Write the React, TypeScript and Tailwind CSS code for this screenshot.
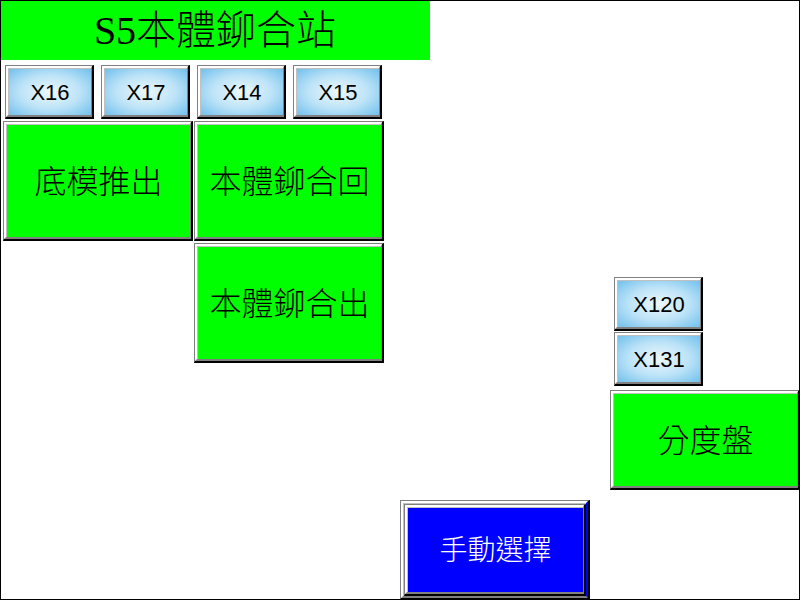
import type { ReactNode } from "react";

const ming = "font-['Liberation_Serif','Noto_Sans_CJK_TC',serif] font-light";

type BevelProps = { children: ReactNode; face: string };

/* Face of a raised key: white and silver on the lit side, grey in the shade. */
function Bevel({ children, face }: BevelProps) {
  return (
    <span className="flex size-full border-t border-l border-r-2 border-b-2 border-t-[#808080] border-l-[#808080] border-r-black border-b-black">
      <span className="flex flex-1 border-t-2 border-l-2 border-r border-b-2 border-t-white border-l-white border-r-[#808080] border-b-[#808080]">
        <span
          className={`flex flex-1 items-center justify-center border-t border-l border-[#c0c0c0] pt-[2px] ${face}`}
        >
          {children}
        </span>
      </span>
    </span>
  );
}

function Sensor({ name }: { name: string }) {
  return (
    <button type="button" className="block h-[54px] w-[89px] shrink-0">
      <Bevel face="bg-[radial-gradient(ellipse_at_center,#edf8fa_0%,#bce3f8_52%,#72c0ec_100%)] font-['Liberation_Sans',Arial,sans-serif] text-[22px] leading-6 text-black">
        {name}
      </Bevel>
    </button>
  );
}

function Action({ label, size }: { label: string; size: string }) {
  return (
    <button type="button" className={`block w-[190px] shrink-0 ${size}`}>
      <Bevel face={`bg-[#00ff00] text-[32px] leading-10 whitespace-nowrap text-black ${ming}`}>
        {label}
      </Bevel>
    </button>
  );
}

export default function App() {
  return (
    <main className="relative flex min-h-screen w-full flex-col bg-white">
      <h1
        className={`flex h-[60px] w-[430px] items-center justify-center bg-[#00ff00] pt-[2px] text-[40px] leading-none whitespace-nowrap text-black ${ming}`}
      >
        S5本體鉚合站
      </h1>

      <div className="flex flex-1">
        <section className="flex shrink-0 flex-col gap-[2px] pt-[5px]">
          <div className="flex gap-[7px] pl-[5px]">
            <Sensor name="X16" />
            <Sensor name="X17" />
            <Sensor name="X14" />
            <Sensor name="X15" />
          </div>
          <div className="grid grid-cols-[190px_190px] gap-x-px gap-y-[2px] pl-[3px]">
            <Action label="底模推出" size="h-[120px]" />
            <Action label="本體鉚合回" size="h-[120px]" />
            <div className="col-start-2">
              <Action label="本體鉚合出" size="h-[120px]" />
            </div>
          </div>
        </section>

        <button type="button" className="ml-4 h-[100px] w-[190px] shrink-0 self-end">
          <span className="flex size-full border-t border-l border-r-2 border-b-2 border-t-[#808080] border-l-[#808080] border-r-black border-b-black">
            <span className="flex flex-1 border-2 border-t-white border-l-white border-r-[#0000ff] border-b-[#808080]">
              <span className="flex flex-1 border-t border-l border-[#c0c0c0]">
                <Bevel
                  face={`bg-[#0000ff] text-[28px] leading-9 whitespace-nowrap text-white ${ming}`}
                >
                  手動選擇
                </Bevel>
              </span>
            </span>
          </span>
        </button>

        <section className="mb-[110px] ml-auto flex shrink-0 flex-col gap-1 self-end">
          <div className="flex flex-col gap-px pl-1">
            <Sensor name="X120" />
            <Sensor name="X131" />
          </div>
          <Action label="分度盤" size="h-[100px]" />
        </section>
      </div>

      <div className="pointer-events-none absolute inset-0 border border-black" />
    </main>
  );
}
